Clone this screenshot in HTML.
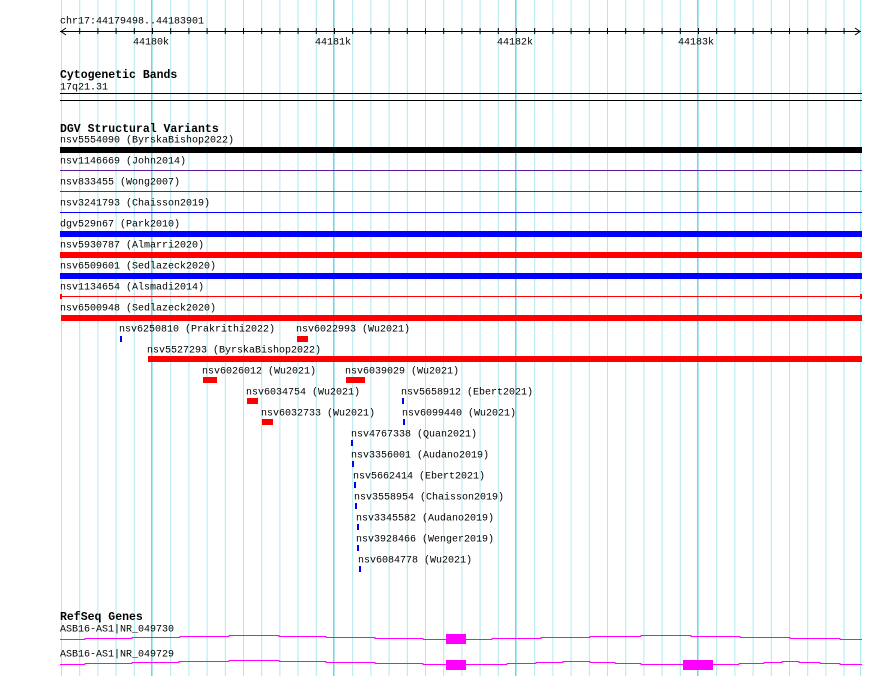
<!DOCTYPE html>
<html><head><meta charset="utf-8"><style>
html,body{margin:0;padding:0;background:#fff;width:890px;height:676px;overflow:hidden}
svg{display:block}
text{font-family:"Liberation Mono","DejaVu Sans Mono",monospace;font-size:10px;fill:#000;transform:translateY(-1.5px)}
.b{font-weight:bold;font-size:11.5px;transform:none}
rect{shape-rendering:crispEdges}
</style></head><body>
<svg width="890" height="676" viewBox="0 0 890 676" xmlns="http://www.w3.org/2000/svg">
<defs>
<pattern id="g" x="61" y="0" width="18.2" height="676" patternUnits="userSpaceOnUse">
<rect x="0" y="0" width="1" height="676" fill="#aee8f0"/>
</pattern>
<pattern id="t" x="61" y="0" width="18.2" height="676" patternUnits="userSpaceOnUse">
<rect x="0" y="28" width="1" height="6" fill="#000"/>
</pattern>
</defs>
<rect x="60" y="0" width="802" height="676" fill="url(#g)"/>
<g fill="#84c8ec">
<rect x="151" y="0" width="1" height="676"/><rect x="333" y="0" width="1" height="676"/>
<rect x="515" y="0" width="1" height="676"/><rect x="697" y="0" width="1" height="676"/>
<rect x="860" y="0" width="1" height="676" fill="#aee8f0"/>
</g>
<!-- ruler -->
<text x="60" y="25">chr17:44179498..44183901</text>
<rect x="60" y="31" width="801" height="1" fill="#000"/>
<rect x="70" y="28" width="785" height="6" fill="url(#t)"/>
<path d="M66 28 L61 31.5 L66 35 M855 28 L860 31.5 L855 35" stroke="#000" fill="none"/>
<text x="133" y="46">44180k</text><text x="315" y="46">44181k</text>
<text x="497" y="46">44182k</text><text x="678" y="46">44183k</text>
<!-- cyto -->
<text class="b" x="60" y="78">Cytogenetic Bands</text>
<text x="60" y="91">17q21.31</text>
<rect x="60" y="93" width="802" height="1" fill="#000"/>
<rect x="60" y="100" width="802" height="1" fill="#000"/>
<!-- DGV -->
<text class="b" x="60" y="132">DGV Structural Variants</text>
<text x="60" y="144">nsv5554090 (ByrskaBishop2022)</text>
<rect x="60" y="147" width="802" height="6" fill="#000"/>
<text x="60" y="165">nsv1146669 (John2014)</text>
<rect x="60" y="170" width="802" height="1" fill="#5a1a9a"/>
<text x="60" y="186">nsv833455 (Wong2007)</text>
<rect x="60" y="191" width="802" height="1" fill="#e00000"/>
<text x="60" y="207">nsv3241793 (Chaisson2019)</text>
<rect x="60" y="212" width="802" height="1" fill="#0000ff"/>
<text x="60" y="228">dgv529n67 (Park2010)</text>
<rect x="60" y="231" width="802" height="6" fill="#0000ff"/>
<text x="60" y="249">nsv5930787 (Almarri2020)</text>
<rect x="60" y="252" width="802" height="6" fill="#ff0000"/>
<text x="60" y="270">nsv6509601 (Sedlazeck2020)</text>
<rect x="60" y="273" width="802" height="6" fill="#0000ff"/>
<text x="60" y="291">nsv1134654 (Alsmadi2014)</text>
<rect x="60" y="296" width="802" height="1" fill="#ff0000"/>
<rect x="60" y="294" width="2" height="5" fill="#ff0000"/><rect x="860" y="294" width="2" height="5" fill="#ff0000"/>
<text x="60" y="312">nsv6500948 (Sedlazeck2020)</text>
<rect x="61" y="315" width="801" height="6" fill="#ff0000"/>
<text x="119" y="333">nsv6250810 (Prakrithi2022)</text>
<rect x="120" y="336" width="2" height="6" fill="#0000ff"/>
<text x="296" y="333">nsv6022993 (Wu2021)</text>
<rect x="297" y="336" width="11" height="6" fill="#ff0000"/>
<text x="147" y="354">nsv5527293 (ByrskaBishop2022)</text>
<rect x="148" y="356" width="714" height="6" fill="#ff0000"/>
<text x="202" y="375">nsv6026012 (Wu2021)</text>
<rect x="203" y="377" width="14" height="6" fill="#ff0000"/>
<text x="345" y="375">nsv6039029 (Wu2021)</text>
<rect x="346" y="377" width="19" height="6" fill="#ff0000"/>
<text x="246" y="396">nsv6034754 (Wu2021)</text>
<rect x="247" y="398" width="11" height="6" fill="#ff0000"/>
<text x="401" y="396">nsv5658912 (Ebert2021)</text>
<rect x="402" y="398" width="2" height="6" fill="#0000ff"/>
<text x="261" y="417">nsv6032733 (Wu2021)</text>
<rect x="262" y="419" width="11" height="6" fill="#ff0000"/>
<text x="402" y="417">nsv6099440 (Wu2021)</text>
<rect x="403" y="419" width="2" height="6" fill="#0000ff"/>
<text x="351" y="438">nsv4767338 (Quan2021)</text>
<rect x="351" y="440" width="2" height="6" fill="#0000ff"/>
<text x="351" y="459">nsv3356001 (Audano2019)</text>
<rect x="352" y="461" width="2" height="6" fill="#0000ff"/>
<text x="353" y="480">nsv5662414 (Ebert2021)</text>
<rect x="354" y="482" width="2" height="6" fill="#0000ff"/>
<text x="354" y="501">nsv3558954 (Chaisson2019)</text>
<rect x="355" y="503" width="2" height="6" fill="#0000ff"/>
<text x="356" y="522">nsv3345582 (Audano2019)</text>
<rect x="357" y="524" width="2" height="6" fill="#0000ff"/>
<text x="356" y="543">nsv3928466 (Wenger2019)</text>
<rect x="357" y="545" width="2" height="6" fill="#0000ff"/>
<text x="358" y="564">nsv6084778 (Wu2021)</text>
<rect x="359" y="566" width="2" height="6" fill="#0000ff"/>
<!-- RefSeq -->
<text class="b" x="60" y="620">RefSeq Genes</text>
<text x="60" y="633">ASB16-AS1|NR_049730</text>
<path d="M60 639.5H85V638.5H132V637.5H180V636.5H229V635.5H279V636.5H326V637.5H375V638.5H423V639.5H467H492V638.5H541V637.5H590V636.5H641V635.5H691V636.5H740V637.5H790V638.5H840V639.5H862" stroke="#ff00ff" fill="none"/>
<rect x="446" y="634" width="20" height="10" fill="#ff00ff"/>
<text x="60" y="658">ASB16-AS1|NR_049729</text>
<path d="M60 664.5H85V663.5H132V662.5H179V661.5H229V660.5H279V661.5H326V662.5H375V663.5H423V664.5H507V663.5H536V662.5H563V661.5H590V662.5H615V663.5H641V664.5H739V663.5H764V662.5H782V661.5H799V662.5H820V663.5H840V664.5H862" stroke="#ff00ff" fill="none"/>
<rect x="446" y="660" width="20" height="10" fill="#ff00ff"/>
<rect x="683" y="660" width="30" height="10" fill="#ff00ff"/>
</svg>
</body></html>
